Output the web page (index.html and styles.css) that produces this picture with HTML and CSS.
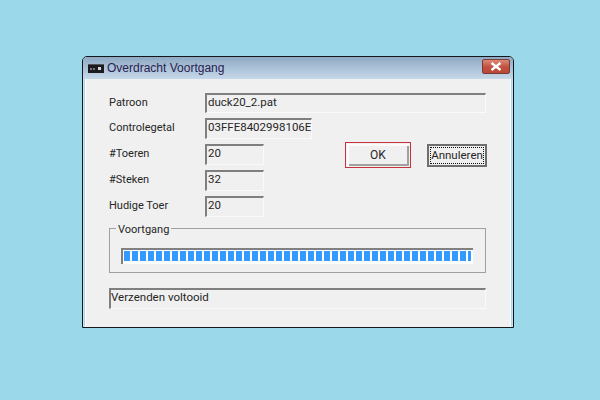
FILE: index.html
```html
<!DOCTYPE html>
<html lang="nl">
<head>
<meta charset="utf-8">
<title>Overdracht Voortgang</title>
<link rel="stylesheet" href="styles.css">
</head>
<body>
<div class="window">
  <div class="titlebar">
    <svg class="app-icon" width="16" height="9" viewBox="0 0 16 9"><rect width="16" height="9" fill="#1c1c20"/><rect x="0" y="0" width="16" height="1" fill="#55555c"/><rect x="10" y="3" width="3" height="3" fill="#d8d8d8"/><rect x="2" y="4" width="2" height="2" fill="#77777c"/><rect x="5" y="4" width="2" height="2" fill="#77777c"/></svg>
    <span class="title">Overdracht Voortgang</span>
    <span class="close"><svg width="14" height="9" viewBox="0 0 14 9"><path d="M2.5 1 L11.5 8 M11.5 1 L2.5 8" stroke="#fff" stroke-width="2.4" fill="none"/></svg></span>
  </div>
  <div class="client">
    <div class="form">
      <span class="label">Patroon</span>
      <span class="field field-wide">duck20_2.pat</span>
      <span class="label">Controlegetal</span>
      <span class="field field-code">03FFE8402998106E</span>
      <span class="label row3">#Toeren</span>
      <span class="field field-num row3">20</span>
      <span class="ok-wrap"><button class="btn ok">OK</button></span>
      <span class="cancel-wrap"><button class="btn cancel"><span class="focus">Annuleren</span></button></span>
      <span class="label">#Steken</span>
      <span class="field field-num">32</span>
      <span class="label">Hudige Toer</span>
      <span class="field field-num">20</span>
    </div>
    <div class="group">
      <span class="legend">Voortgang</span>
      <div class="track"><div class="bar"></div></div>
    </div>
    <div class="field status">Verzenden voltooid</div>
  </div>
</div>
</body>
</html>
```
FILE: styles.css
```css
* { box-sizing: border-box; }
html, body { margin: 0; height: 100%; }
body {
  background: #9bd9ea;
  padding: 56px 0 0 82px;
  font-family: Roboto, "Liberation Sans", Arial, sans-serif;
  font-size: 11.5px;
  color: #262626;
}
.window {
  width: 432px;
  height: 272px;
  border: 1px solid #14181c;
  border-radius: 5px 5px 0 0;
  background: #a9d6ea;
  padding: 0 2px;
  display: flex;
  flex-direction: column;
  box-shadow: inset 0 0 0 1px #c8e4f0;
}
.titlebar {
  height: 22px;
  flex: none;
  margin: 0 -2px;
  padding: 0 3px 0 5px;
  display: flex;
  align-items: center;
  border-radius: 4px 4px 0 0;
  background: linear-gradient(#8fa9c4, #c6d9ea);
}
.app-icon { flex: none; margin-top: 1px; }
.title {
  margin-left: 3px;
  font-family: "Liberation Sans", Arial, sans-serif;
  font-size: 12px;
  color: #2a2150;
  flex: 1;
}
.close {
  width: 28px;
  height: 15px;
  margin-top: -4px;
  display: flex;
  align-items: center;
  justify-content: center;
  border: 1px solid #7d3a34;
  border-radius: 2px;
  background: linear-gradient(#dc8a78, #c0503e 55%, #b8493a);
}
.client {
  flex: 1;
  background: #f0f0f0;
  border-left: 1px solid #fff;
  border-right: 1px solid #fff;
  padding: 14px 23px 0 23px;
}
.form {
  display: grid;
  grid-template-columns: 96px 59px 48px 33px 66px 16px 59px;
  grid-template-rows: 20px;
  grid-auto-rows: 21px;
  row-gap: 5px;
  align-items: start;
}
.label { grid-column: 1; font-size: 11px; line-height: 20px; }
.field {
  height: 100%;
  padding: 0 0 0 1px;
  line-height: 15px;
  white-space: nowrap;
  border-top: 2px solid #7f7f7f;
  border-left: 2px solid #7f7f7f;
  border-right: 1px solid #fafafa;
  border-bottom: 1px solid #fafafa;
}
.field-wide { grid-column: 2 / -1; }
.field-code { grid-column: 2 / 4; }
.field-num { grid-column: 2; }
.ok-wrap { grid-column: 5; grid-row: 3; margin-top: -2px; }
.cancel-wrap { grid-column: 7; grid-row: 3; }
.btn {
  display: block;
  padding: 0;
  font: inherit;
  color: #262626;
  background: #f0f0f0;
}
.ok {
  width: 66px;
  height: 26px;
  font-size: 12px;
  border: 1px solid #c8323a;
  background-clip: padding-box;
  box-shadow: inset 0 0 0 1px #f0f0f0, inset 3px 3px 0 #fbfbfb, inset -3px -3px 0 #a0a0a0;
}
.cancel {
  width: 60px;
  height: 23px;
  border: 2px solid #6e6e6e;
  padding: 1px;
}
.focus {
  display: block;
  height: 100%;
  line-height: 15px;
  border: 1px dotted #111;
}
.group {
  position: relative;
  margin-top: 11px;
  width: 377px;
  height: 45px;
  border: 1px solid #a0a0a0;
  padding: 19px 12px 0 11px;
}
.legend {
  position: absolute;
  left: 6px;
  top: -6px;
  padding: 0 2px;
  font-size: 11px;
  line-height: 13px;
  background: #f0f0f0;
}
.track {
  width: 352px;
  height: 16px;
  background: #fdfeff;
  border-top: 2px solid #808080;
  border-left: 2px solid #808080;
  padding: 1px 0 0 1px;
}
.bar {
  width: 347px;
  height: 10px;
  background: repeating-linear-gradient(90deg, #3399ff 0 6px, transparent 6px 8px);
}
.status {
  margin-top: 15px;
  width: 377px;
  height: 21px;
  padding-left: 0;
}
```
